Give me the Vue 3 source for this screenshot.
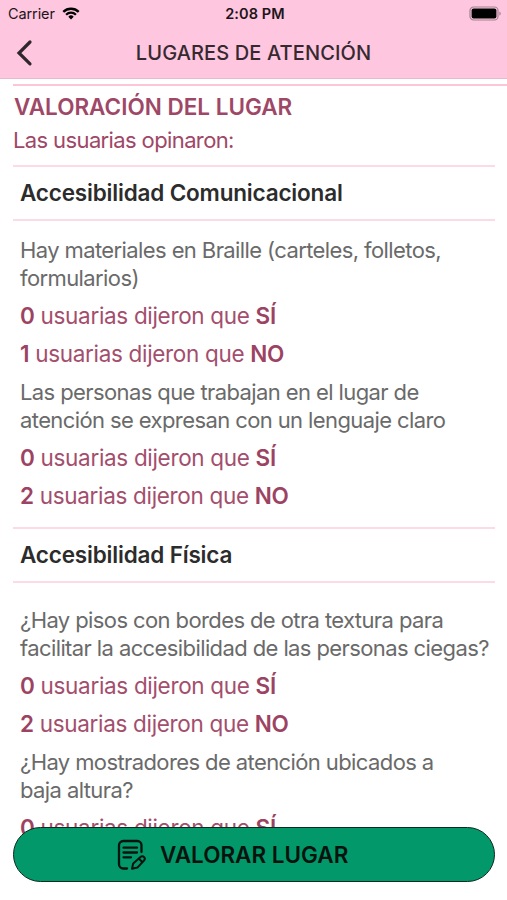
<template>
  <div class="screen">
    <header class="top">
      <div class="status-bar">
        <div class="carrier">
          <span class="carrier-name">Carrier</span>
          <svg class="wifi" viewBox="0 0 18 13" width="18" height="13">
            <path d="M1.3 4.9a11 11 0 0 1 15.4 0" />
            <path d="M4.1 7.7a7 7 0 0 1 9.8 0" />
            <path class="dot" d="M9 12.4l-2.7-2.7a3.8 3.8 0 0 1 5.4 0z" />
          </svg>
        </div>
        <span class="clock">2:08 PM</span>
        <div class="battery">
          <svg viewBox="0 0 33 15" width="33" height="15">
            <rect class="case" x="1" y="1" width="28" height="13" rx="3.6" />
            <rect x="2.6" y="2.6" width="24.8" height="9.8" rx="2" />
            <path class="cap" d="M30.4 5.4c1.8.6 1.8 3.6 0 4.2z" />
          </svg>
        </div>
      </div>
      <div class="nav-bar">
        <button class="back" title="Volver" @click="goBack">
          <svg viewBox="0 0 18 28" width="18" height="28">
            <path d="M15 3L4 14 15 24.8" />
          </svg>
        </button>
        <h1 class="nav-title">LUGARES DE ATENCIÓN</h1>
      </div>
    </header>

    <main class="content">
      <div class="intro">
        <h2 class="intro-title">VALORACIÓN DEL LUGAR</h2>
        <p class="intro-text">Las usuarias opinaron:</p>
      </div>

      <section v-for="section in sections" :key="section.id" :class="['section', section.id]">
        <h3 class="section-title">{{ section.title }}</h3>
        <div class="questions">
          <div v-for="question in section.questions" :key="question.text" class="question">
            <p class="question-text">{{ question.text }}</p>
            <p v-for="answer in question.answers" :key="answer.label" class="answer">
              <strong>{{ answer.total }}</strong> usuarias dijeron que <strong>{{ answer.label }}</strong>
            </p>
          </div>
        </div>
      </section>
    </main>

    <button class="rate">
      <svg class="rate-icon" viewBox="0 0 30 32" width="30" height="32">
        <path d="M24.5 13V6.2A4.2 4.2 0 0 0 20.3 2H6.2A4.2 4.2 0 0 0 2 6.2V25.3A4.2 4.2 0 0 0 6.2 29.5H10" />
        <path d="M6.5 8.7h13.5M6.5 13.5h13.5M6.5 18.3h7.5" />
        <path class="pencil" d="M15 29.8l1.2-5.4 7.3-6.3a2.4 2.4 0 0 1 3.5 3.4l-6.6 7.1z" />
        <path class="pencil" d="M22 19.8l3 3" />
      </svg>
      <span class="rate-label">VALORAR LUGAR</span>
    </button>
  </div>
</template>

<script setup>
const buildAnswers = (yes, no) => [
  { label: 'SÍ', total: yes },
  { label: 'NO', total: no }
]

const sections = [
  {
    id: 'comunicacional',
    title: 'Accesibilidad Comunicacional',
    questions: [
      {
        text: 'Hay materiales en Braille (carteles, folletos,\nformularios)',
        answers: buildAnswers(0, 1)
      },
      {
        text: 'Las personas que trabajan en el lugar de\natención se expresan con un lenguaje claro',
        answers: buildAnswers(0, 2)
      }
    ]
  },
  {
    id: 'fisica',
    title: 'Accesibilidad Física',
    questions: [
      {
        text: '¿Hay pisos con bordes de otra textura para\nfacilitar la accesibilidad de las personas ciegas?',
        answers: buildAnswers(0, 2)
      },
      {
        text: '¿Hay mostradores de atención ubicados a\nbaja altura?',
        answers: [{ label: 'SÍ', total: 0 }]
      }
    ]
  }
]

const goBack = () => {
  window.history.back()
}
</script>

<style>
body {
  margin: 0;
}
</style>

<style scoped>
.screen {
  position: relative;
  width: 507px;
  height: 900px;
  overflow: hidden;
  background: #fff;
  font-family: Inter, "Liberation Sans", sans-serif;
}

h1,
h2,
h3,
p {
  margin: 0;
}

button {
  padding: 0;
  font-family: inherit;
  cursor: pointer;
}

.top {
  box-sizing: border-box;
  height: 79px;
  background: #fec6df;
  border-bottom: 1px solid #e8b9cd;
}

.status-bar {
  display: grid;
  grid-template-columns: 1fr auto 1fr;
  align-items: center;
  height: 27px;
  padding: 0 5px 0 8px;
  color: #1d1519;
}

.carrier {
  display: flex;
  align-items: center;
  gap: 7px;
}

.carrier-name {
  font-size: 14.5px;
  letter-spacing: -0.1px;
}

.wifi {
  fill: none;
  stroke: #000;
  stroke-width: 2.3;
}

.wifi .dot {
  fill: #000;
  stroke: none;
}

.clock {
  font-size: 14.5px;
  font-weight: 600;
  letter-spacing: 0.1px;
}

.battery {
  display: flex;
  justify-content: flex-end;
}

.battery .case {
  fill: none;
  stroke: #a5808f;
  stroke-width: 1.2;
}

.battery .cap {
  fill: #a5808f;
}

.nav-bar {
  display: grid;
  grid-template-columns: 40px 1fr 40px;
  align-items: center;
  height: 51px;
}

.back {
  display: flex;
  justify-content: flex-end;
  padding-right: 7px;
  border: none;
  background: none;
}

.back path {
  fill: none;
  stroke: #2e272b;
  stroke-width: 3.2;
  stroke-linecap: round;
}

.nav-title {
  font-size: 20px;
  font-weight: 500;
  line-height: 50px;
  letter-spacing: 0.12px;
  text-align: center;
  color: #35292f;
}

.content {
  padding: 5px 12px 0 13px;
}

.intro {
  height: 79px;
  margin-right: -12px;
  border-top: 2px solid #fcc5d8;
  color: #9f4767;
}

.intro-title {
  padding: 1px 0 0 1px;
  font-size: 22.5px;
  font-weight: 600;
  line-height: 39px;
}

.intro-text {
  font-size: 22px;
  line-height: 28px;
  letter-spacing: -0.62px;
}

.section-title {
  box-sizing: border-box;
  height: 56px;
  padding-left: 7px;
  border-top: 2px solid #fddbe6;
  border-bottom: 2px solid #fddbe6;
  font-size: 22.5px;
  font-weight: 600;
  line-height: 52px;
  letter-spacing: -0.18px;
  color: #2c2c2c;
}

.questions {
  padding: 15px 0 7px 7px;
}

.fisica .questions {
  padding-top: 23px;
}

.question {
  padding-bottom: 5px;
}

.question-text {
  margin-bottom: 5px;
  font-size: 22px;
  line-height: 28px;
  letter-spacing: -0.6px;
  white-space: pre-line;
  color: #6a6a6a;
}

.answer {
  font-size: 22.5px;
  line-height: 38px;
  letter-spacing: -0.32px;
  color: #a34e6d;
}

.answer strong {
  font-weight: 600;
  color: #9c4363;
}

.rate {
  position: absolute;
  left: 13px;
  right: 12px;
  bottom: 18px;
  box-sizing: border-box;
  display: flex;
  align-items: center;
  height: 55px;
  padding-left: 103px;
  border: 1.5px solid #0b2a20;
  border-radius: 28px;
  background: #039869;
  color: #04130e;
}

.rate-icon {
  fill: none;
  stroke: #04130e;
  stroke-width: 2.3;
  stroke-linecap: round;
  stroke-linejoin: round;
}

.rate-icon .pencil {
  stroke-width: 2;
}

.rate-label {
  margin-left: 13px;
  font-size: 22.5px;
  font-weight: 600;
  line-height: 26px;
}
</style>
